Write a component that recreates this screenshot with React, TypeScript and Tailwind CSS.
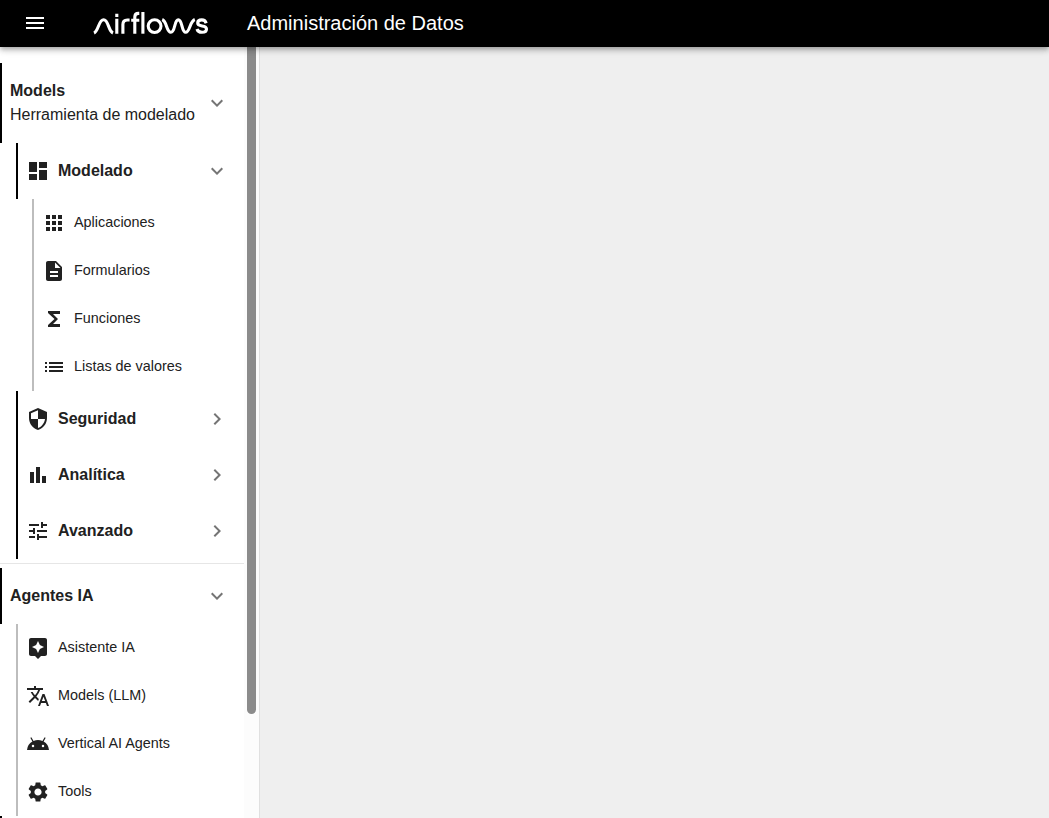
import React, { useState } from "react";
import type { IconType } from "react-icons";
import {
  MdAndroid,
  MdApps,
  MdAssistant,
  MdChevronRight,
  MdDashboard,
  MdDescription,
  MdExpandMore,
  MdFunctions,
  MdList,
  MdMenu,
  MdSecurity,
  MdSettings,
  MdTranslate,
  MdTune,
} from "react-icons/md";

type Glyph = IconType | ((props: { className?: string }) => React.ReactElement);

function BarsIcon({ className }: { className?: string }) {
  return (
    <svg viewBox="0 0 24 24" fill="currentColor" className={className}>
      <path d="M4 9h4v11H4zM16 13h4v7h-4zM10 4h4v16h-4z" />
    </svg>
  );
}

function Logo() {
  return (
    <svg
      width="116"
      height="26"
      viewBox="93 10 116 26"
      fill="none"
      stroke="white"
      strokeWidth="3.1"
      role="img"
      aria-label="airflows"
    >
      <path d="M94 33C98.6 31 98.6 19.8 103.6 19.8S108.2 31 113 33" />
      <path d="M116.8 18.8V33.7M116.8 13.7V16.9" />
      <path d="M122.9 33.7V24.6Q122.9 20 127.3 20H129.6" />
      <path d="M134.8 33.7V17Q134.8 13.4 138.4 13.4H139.3M131.2 20.2H139.3" />
      <path d="M142.9 12V33.7" />
      <circle cx="154.6" cy="26.1" r="6.4" />
      <path d="M162.2 19.5C167 21.4 166.4 32.3 170.9 32.3S174 19.9 178.3 19.9S181.4 32.3 185.7 32.3S189.6 21.4 194.8 19.5" />
      <path d="M206.2 23.2C205.5 20.9 204 19.9 201.8 19.9C199.2 19.9 197.7 21.2 197.7 23C197.7 27.6 206.5 24.2 206.5 29C206.5 31.2 204.8 32.3 202 32.3C199.3 32.3 197.6 31.3 197 29" />
    </svg>
  );
}

function Group({
  label,
  subtitle,
  icon: Icon,
  initial = true,
  children,
}: {
  label: string;
  subtitle?: string;
  icon?: Glyph;
  initial?: boolean;
  children?: React.ReactNode;
}) {
  const [open, setOpen] = useState(initial);
  const Arrow = open ? MdExpandMore : MdChevronRight;
  return (
    <li>
      <button
        type="button"
        onClick={() => setOpen(!open)}
        className={`flex w-full items-center border-l-2 border-black pr-[15px] pl-2 text-left ${subtitle ? "h-20" : "h-14"}`}
      >
        {Icon && <Icon className="mr-2 size-6 shrink-0" />}
        <span className="flex-1 whitespace-nowrap text-base leading-6">
          <b className="block font-bold">{label}</b>
          {subtitle && <span className="block">{subtitle}</span>}
        </span>
        <Arrow className="size-6 shrink-0 text-[#757575]" />
      </button>
      {open && children && <ul className="pl-4">{children}</ul>}
    </li>
  );
}

function Item({ label, icon: Icon }: { label: string; icon: Glyph }) {
  return (
    <li className="flex h-12 items-center gap-2 border-l-2 border-[#bdbdbd] pl-2">
      <Icon className="size-6 shrink-0" />
      <span className="-mt-0.5 text-[14.4px] leading-6">{label}</span>
    </li>
  );
}

export default function App() {
  return (
    <div className="flex h-[818px] flex-col overflow-hidden bg-[#efefef] font-['Liberation_Sans',Arial,sans-serif] text-[#212121]">
      <header className="relative z-10 flex h-[47px] shrink-0 items-center bg-black pb-px text-white shadow-[0_2px_4px_-1px_rgba(0,0,0,0.2),0_4px_5px_rgba(0,0,0,0.14),0_1px_10px_rgba(0,0,0,0.12)]">
        <MdMenu className="ml-[23px] size-6" />
        <div className="ml-[46px]">
          <Logo />
        </div>
        <h1 className="ml-[38px] text-xl leading-8">Administración de Datos</h1>
      </header>
      <div className="flex min-h-0 flex-1">
        <aside className="flex w-[260px] shrink-0 overflow-hidden border-r border-[#e0e0e0] bg-white">
          <nav className="w-[244px] shrink-0 pt-4">
            <ul>
              <Group label="Models" subtitle="Herramienta de modelado">
                <Group label="Modelado" icon={MdDashboard}>
                  <Item label="Aplicaciones" icon={MdApps} />
                  <Item label="Formularios" icon={MdDescription} />
                  <Item label="Funciones" icon={MdFunctions} />
                  <Item label="Listas de valores" icon={MdList} />
                </Group>
                <Group label="Seguridad" icon={MdSecurity} initial={false} />
                <Group label="Analítica" icon={BarsIcon} initial={false} />
                <Group label="Avanzado" icon={MdTune} initial={false} />
              </Group>
              <li className="my-1 h-px bg-[#e6e6e6]" />
              <Group label="Agentes IA">
                <Item label="Asistente IA" icon={MdAssistant} />
                <Item label="Models (LLM)" icon={MdTranslate} />
                <Item label="Vertical AI Agents" icon={MdAndroid} />
                <Item label="Tools" icon={MdSettings} />
              </Group>
              <li className="h-0.5 border-l-2 border-black" />
            </ul>
          </nav>
          <div className="flex-1 bg-[#fcfcfc] px-[3px]">
            <div className="h-[667px] w-[9px] rounded-b-[5px] bg-[#8b8b8b]" />
          </div>
        </aside>
        <main className="flex-1 bg-[#efefef]" />
      </div>
    </div>
  );
}
